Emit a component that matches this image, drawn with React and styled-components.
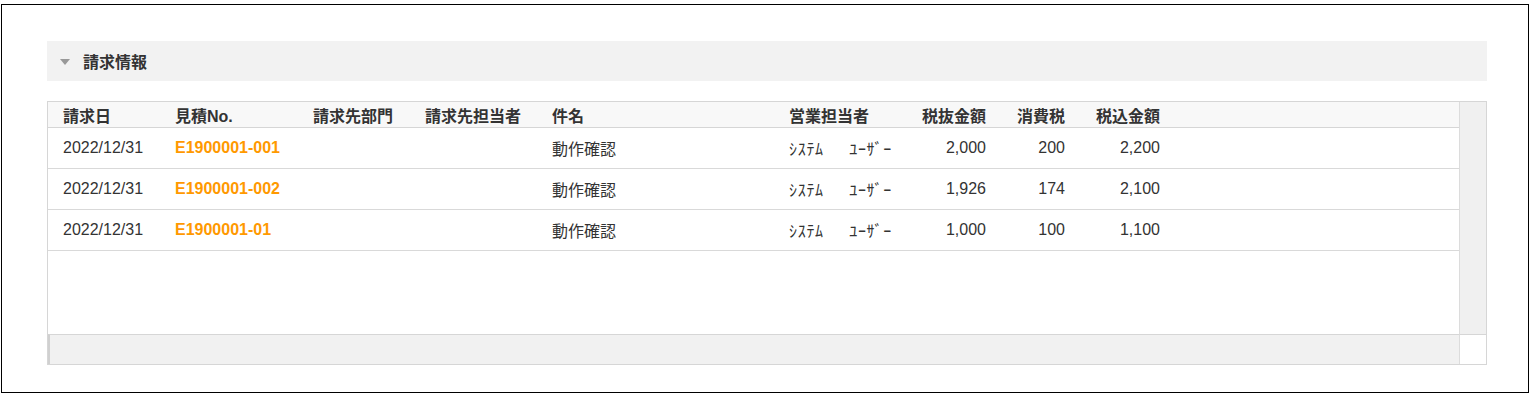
import React from "react";
import styled, { createGlobalStyle } from "styled-components";

const Global = createGlobalStyle`
  html, body { margin: 0; padding: 0; background: #fff; }
  body { font-family: "Liberation Sans", Arial, "Noto Sans CJK JP", sans-serif; color: #333; }
  * { box-sizing: border-box; }
`;

const Frame = styled.div`
  margin: 4px 2px 0 1px;
  height: 389px;
  border: 1px solid #000;
  padding: 36px 41px 0 45px;
`;

const SectionHeader = styled.div`
  height: 40px;
  background: #f2f2f2;
  display: flex;
  align-items: center;
  padding-left: 13px;
  gap: 13px;
`;

const Caret = styled.span`
  width: 0;
  height: 0;
  border-left: 5px solid transparent;
  border-right: 5px solid transparent;
  border-top: 6px solid #999;
  margin-top: 1px;
`;

const SectionTitle = styled.span`
  font-size: 16px;
  font-weight: bold;
  color: #333;
`;

const TableBox = styled.div`
  margin-top: 20px;
  border: 1px solid #d6d6d6;
  display: grid;
  grid-template-columns: 1fr 27px;
  grid-template-rows: 232px 30px;
`;

const GridArea = styled.div`
  overflow: hidden;
`;

const COLS = "112px 138px 112px 127px 237px 131px 86px 79px 95px 1fr";

const HeadRow = styled.div`
  display: grid;
  grid-template-columns: ${COLS};
  height: 26px;
  background: #f8f8f8;
  border-bottom: 1px solid #d6d6d6;
`;

const Row = styled.div`
  display: grid;
  grid-template-columns: ${COLS};
  height: 41px;
  border-bottom: 1px solid #d9d9d9;
`;

const HeadCell = styled.div`
  display: flex;
  align-items: center;
  justify-content: ${(p) => (p.$right ? "flex-end" : "flex-start")};
  padding: ${(p) => (p.$right ? "0 5px 0 0" : "0 0 0 15px")};
  font-size: 16px;
  font-weight: bold;
  color: #333;
  white-space: nowrap;
  font-family: "Liberation Sans", Arial, "Noto Sans CJK JP", sans-serif;
`;

const Cell = styled.div`
  display: flex;
  align-items: center;
  justify-content: ${(p) => (p.$right ? "flex-end" : "flex-start")};
  padding: ${(p) => (p.$right ? "0 5px 0 0" : "0 0 0 15px")};
  font-size: 16px;
  color: #333;
  white-space: nowrap;
  font-family: "Liberation Sans", Arial, "Noto Sans CJK JP", sans-serif;
`;

const LinkCell = styled(Cell)`
  color: #ff9900;
  font-weight: bold;
`;

const KanaCell = styled(Cell)`
  font-family: "Noto Sans CJK JP", sans-serif;
  letter-spacing: 0.7px;
`;

const VTrack = styled.div`
  background: #f0f0f0;
  border-left: 1px solid #dcdcdc;
`;

const HTrack = styled.div`
  background: #f1f1f1;
  border-top: 1px solid #d6d6d6;
  border-left: 2px solid #d0d0d0;
`;

const Corner = styled.div`
  background: #fff;
  border-top: 1px solid #d6d6d6;
  border-left: 1px solid #dcdcdc;
`;

const headers = [
  ["請求日"],
  ["見積No."],
  ["請求先部門"],
  ["請求先担当者"],
  ["件名"],
  ["営業担当者"],
  ["税抜金額", true],
  ["消費税", true],
  ["税込金額", true],
];

const USER = "ｼｽﾃﾑ\u3000\u2002ﾕｰｻﾞｰ";

const rows = [
  { date: "2022/12/31", no: "E1900001-001", title: "動作確認", user: USER, ex: "2,000", tax: "200", inc: "2,200" },
  { date: "2022/12/31", no: "E1900001-002", title: "動作確認", user: USER, ex: "1,926", tax: "174", inc: "2,100" },
  { date: "2022/12/31", no: "E1900001-01", title: "動作確認", user: USER, ex: "1,000", tax: "100", inc: "1,100" },
];

export default function App() {
  return (
    <>
      <Global />
      <Frame>
        <SectionHeader>
          <Caret />
          <SectionTitle>請求情報</SectionTitle>
        </SectionHeader>
        <TableBox>
          <GridArea>
            <HeadRow>
              {headers.map(([h, r]) => (
                <HeadCell key={h} $right={r}>{h}</HeadCell>
              ))}
              <HeadCell />
            </HeadRow>
            {rows.map((r) => (
              <Row key={r.no}>
                <Cell>{r.date}</Cell>
                <LinkCell>{r.no}</LinkCell>
                <Cell />
                <Cell />
                <Cell>{r.title}</Cell>
                <KanaCell>{r.user}</KanaCell>
                <Cell $right>{r.ex}</Cell>
                <Cell $right>{r.tax}</Cell>
                <Cell $right>{r.inc}</Cell>
                <Cell />
              </Row>
            ))}
          </GridArea>
          <VTrack />
          <HTrack />
          <Corner />
        </TableBox>
      </Frame>
    </>
  );
}
